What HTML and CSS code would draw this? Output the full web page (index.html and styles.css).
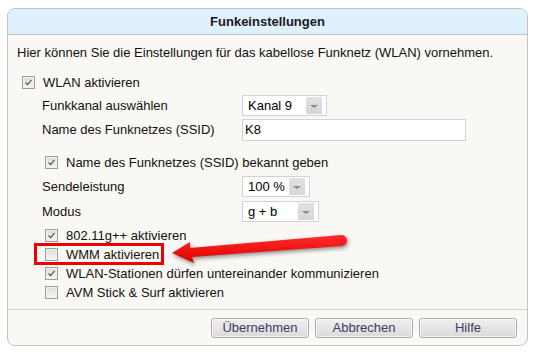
FILE: index.html
```
<!DOCTYPE html>
<html lang="de">
<head>
<meta charset="utf-8">
<title>Funkeinstellungen</title>
<link rel="stylesheet" href="styles.css">
</head>
<body>
<div class="panel">
  <div class="head">Funkeinstellungen</div>
  <div class="body">
    <p class="intro">Hier können Sie die Einstellungen für das kabellose Funknetz (WLAN) vornehmen.</p>
    <div class="row main-check">
      <span class="cb checked"><svg viewBox="0 0 13 13"><polyline points="3,6.5 5.5,9 10,3.5"/></svg></span>
      <span>WLAN aktivieren</span>
    </div>
    <div class="row field r-kanal">
      <span class="label">Funkkanal auswählen</span>
      <span class="select w-kanal"><span class="val">Kanal 9</span><span class="arrow"></span></span>
    </div>
    <div class="row field r-ssid">
      <span class="label">Name des Funknetzes (SSID)</span>
      <span class="input">K8</span>
    </div>
    <div class="row sub r-bekannt">
      <span class="cb checked"><svg viewBox="0 0 13 13"><polyline points="3,6.5 5.5,9 10,3.5"/></svg></span>
      <span>Name des Funknetzes (SSID) bekannt geben</span>
    </div>
    <div class="row field r-sende">
      <span class="label">Sendeleistung</span>
      <span class="select w-sende"><span class="val">100 %</span><span class="arrow"></span></span>
    </div>
    <div class="row field r-modus">
      <span class="label">Modus</span>
      <span class="select w-modus"><span class="val">g + b</span><span class="arrow"></span></span>
    </div>
    <div class="row sub r-first">
      <span class="cb checked"><svg viewBox="0 0 13 13"><polyline points="3,6.5 5.5,9 10,3.5"/></svg></span>
      <span>802.11g++ aktivieren</span>
    </div>
    <div class="row sub r-wmm">
      <span class="cb"></span>
      <span>WMM aktivieren</span>
      <span class="mark"></span>
      <svg class="pointer" viewBox="0 0 190 42" width="190" height="42">
        <defs>
          <linearGradient id="rg" x1="0" y1="0" x2="0" y2="1">
            <stop offset="0" stop-color="#ff2a2a"/>
            <stop offset="1" stop-color="#e00000"/>
          </linearGradient>
        </defs>
        <path d="M7,25 L25,14 L25,20 L176,7 A5.5,5.5 0 0 1 177,18 L27,29 L29,35 Z" fill="url(#rg)"/>
      </svg>
    </div>
    <div class="row sub">
      <span class="cb checked"><svg viewBox="0 0 13 13"><polyline points="3,6.5 5.5,9 10,3.5"/></svg></span>
      <span>WLAN-Stationen dürfen untereinander kommunizieren</span>
    </div>
    <div class="row sub">
      <span class="cb"></span>
      <span>AVM Stick &amp; Surf aktivieren</span>
    </div>
  </div>
  <div class="foot">
    <button class="btn">Übernehmen</button>
    <button class="btn">Abbrechen</button>
    <button class="btn">Hilfe</button>
  </div>
</div>
</body>
</html>
```
FILE: styles.css
```
* { box-sizing: border-box; }
html, body { margin: 0; padding: 0; background: #fff; }
body {
  font-family: "Liberation Sans", Arial, sans-serif;
  font-size: 13px;
  color: #111;
}
.panel {
  margin: 8px 0 0 7px;
  width: 521px;
  height: 338px;
  border: 1px solid #c3c3bf;
  border-radius: 8px;
  background: #f9f8f4;
  display: flex;
  flex-direction: column;
}
.head {
  height: 26px;
  background: #dff1fd;
  border-bottom: 1px solid #c3c3bf;
  border-radius: 7px 7px 0 0;
  display: flex;
  align-items: center;
  justify-content: center;
  font-weight: bold;
  color: #1a1a1a;
}
.body {
  flex: 1;
  padding: 10px 0 0 0;
  border-bottom: 1px solid #cfcfcb;
}
.intro {
  margin: 0;
  padding-left: 9px;
  height: 16px;
  line-height: 16px;
}
.row {
  display: flex;
  align-items: center;
}
.main-check { margin-top: 11px; height: 20px; padding-left: 14px; }
.field { padding-left: 34px; }
.label { width: 200px; }
.r-kanal { margin-top: 3px; height: 21px; }
.r-ssid { margin-top: 2px; height: 23px; }
.r-bekannt { margin-top: 12px; height: 20px; }
.r-sende { margin-top: 4px; height: 21px; }
.r-modus { margin-top: 3px; height: 22px; }
.r-first { margin-top: 4px; }
.sub { height: 19px; padding-left: 37px; }
.r-wmm { position: relative; }

.cb {
  width: 13px;
  height: 13px;
  flex: none;
  margin-right: 8px;
  border: 1px solid #9d9d9d;
  background: linear-gradient(#dcdcdc, #f6f6f6);
  box-shadow: inset 0 0 0 1px #f2f2f2;
  display: inline-flex;
}
.cb svg { width: 11px; height: 11px; }
.cb polyline { fill: none; stroke: #4d4d4d; stroke-width: 1.3; }

.select {
  height: 21px;
  border: 1px solid #d2d2d2;
  background: #fff;
  display: flex;
  align-items: center;
  padding: 1px 4px 1px 5px;
}
.select .val { flex: 1; color: #000; }
.select .arrow {
  width: 16px;
  height: 17px;
  background: linear-gradient(#e2e2e2, #d6d6d6);
  position: relative;
}
.select .arrow::after {
  content: "";
  position: absolute;
  left: 4px;
  top: 8px;
  border-left: 4px solid transparent;
  border-right: 4px solid transparent;
  border-top: 3px solid #8a8a8a;
}
.w-kanal { width: 85px; }
.w-sende { width: 68px; }
.w-modus { width: 77px; }
.input {
  width: 224px;
  height: 22px;
  border: 1px solid #d2d2d2;
  background: #fff;
  padding: 1px 2px;
  line-height: 18px;
  color: #000;
}

.mark {
  position: absolute;
  left: 26px;
  top: -2px;
  width: 130px;
  height: 22px;
  border: 3.5px solid #ee0000;
}
.pointer {
  position: absolute;
  left: 157px;
  top: -17px;
  filter: drop-shadow(1px 2px 2px rgba(0,0,0,0.45));
}

.foot {
  height: 35px;
  display: flex;
  justify-content: flex-end;
  align-items: flex-start;
  gap: 6px;
  padding: 8px 10px 0 0;
}
.btn {
  width: 98px;
  height: 20px;
  font-family: "Liberation Sans", Arial, sans-serif;
  font-size: 13px;
  color: #3c3c5c;
  border: 1px solid #acacac;
  border-radius: 3px;
  background: linear-gradient(#f0f0f0, #dadada);
  box-shadow: inset 0 0 0 1px rgba(255,255,255,0.6);
  padding: 0;
  line-height: 18px;
}
```
